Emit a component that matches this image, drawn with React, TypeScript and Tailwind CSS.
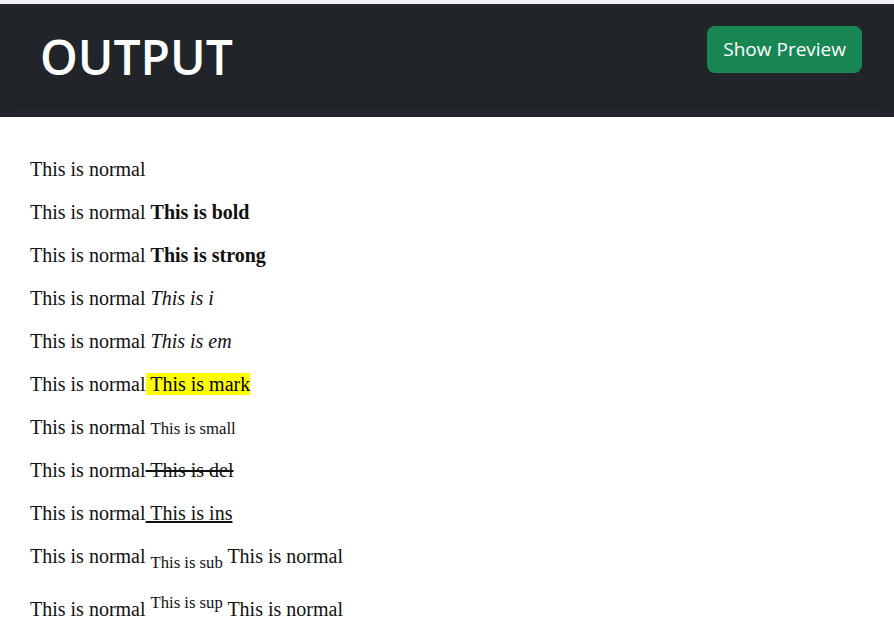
import type {FC} from 'react';

const Output: FC = () => {
  return (
    <div className="min-h-screen bg-white">
      <div className="h-[4px] bg-[#f1f1f1]" />
      <header className="h-[113px] bg-[#212529]">
        <div className="mx-[17px] flex h-[102px] w-[863px] items-start justify-between border-b border-[#191c1f] pl-[23px] pr-[18px]">
          <h1 className="mt-[29px] font-['Open_Sans',sans-serif] text-[48px] font-semibold leading-none text-white">
            OUTPUT
          </h1>
          <button className="mt-[22px] h-[47px] rounded-lg bg-[#198754] px-4 font-['Open_Sans',sans-serif] text-[19px] text-white">
            Show Preview
          </button>
        </div>
      </header>
      <main className="px-[30px] pt-[21px] font-['Liberation_Serif',serif] text-[20px] text-[#111] [line-height:normal]">
        <p className="my-5">This is normal</p>
        <p className="my-5">
          This is normal <b>This is bold</b>
        </p>
        <p className="my-5">
          This is normal <strong>This is strong</strong>
        </p>
        <p className="my-5">
          This is normal <i>This is i</i>
        </p>
        <p className="my-5">
          This is normal <em>This is em</em>
        </p>
        <p className="my-5">
          This is normal<mark className="bg-[#ffff00] text-black"> This is mark</mark>
        </p>
        <p className="my-5">
          This is normal <small className="[font-size:smaller]">This is small</small>
        </p>
        <p className="my-5">
          This is normal<del className="line-through"> This is del</del>
        </p>
        <p className="my-5">
          This is normal<ins className="underline"> This is ins</ins>
        </p>
        <p className="my-5">
          This is normal{' '}
          <sub className="static align-sub [font-size:smaller] [line-height:normal]">This is sub</sub> This is normal
        </p>
        <p className="my-5">
          This is normal{' '}
          <sup className="static align-super [font-size:smaller] [line-height:normal]">This is sup</sup> This is normal
        </p>
      </main>
    </div>
  );
};

export default Output;
